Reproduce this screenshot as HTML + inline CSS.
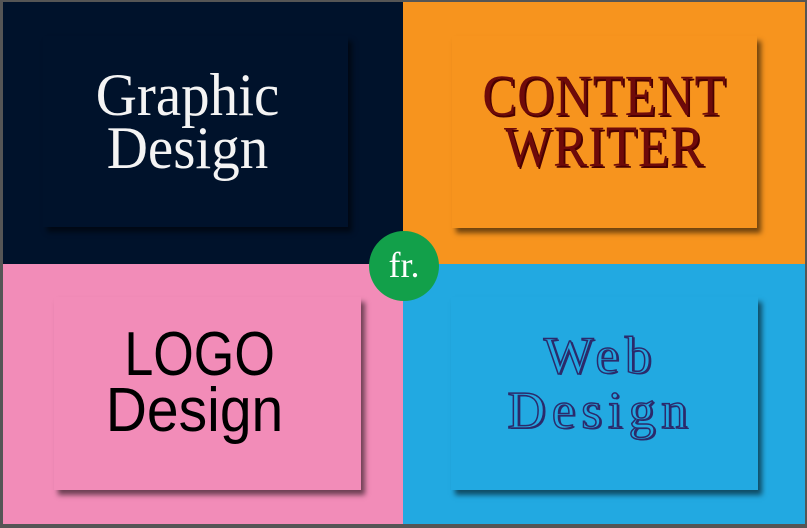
<!DOCTYPE html>
<html><head><style>
body{margin:0;width:807px;height:528px;background:#555;position:relative;overflow:hidden}
.q{position:absolute}
.card{position:absolute;box-shadow:4px 5px 5px rgba(0,0,0,.55)}
.t{position:absolute;left:0;right:0;text-align:center;white-space:nowrap}
.t span{display:inline-block}
</style></head><body>
<div class="q" style="left:3px;top:2px;width:400px;height:262px;background:#00122b"></div>
<div class="q" style="left:403px;top:2px;width:402px;height:262px;background:#f7941e"></div>
<div class="q" style="left:3px;top:264px;width:400px;height:260px;background:#f28cb8"></div>
<div class="q" style="left:403px;top:264px;width:402px;height:260px;background:#22a9e1"></div>

<div class="card" style="left:43px;top:36px;width:305px;height:191px;background:#00122b">
 <div class="t" style="top:33px;left:-16px;font:60px/53px 'Liberation Serif',serif;color:#f4f4f4;transform:scaleX(.95)">Graphic<br>Design</div>
</div>
<div class="card" style="left:452px;top:36px;width:305px;height:192px;background:#f7941e">
 <div class="t" style="top:34px;font:58px/51px 'Liberation Serif',serif;color:#6e0a0a;transform:scaleX(.88);text-shadow:2px 2px 0 #4a0000;letter-spacing:1px">CONTENT<br>WRITER</div>
</div>
<div class="card" style="left:54px;top:297px;width:307px;height:193px;background:#f28cb8">
 <div class="t" style="top:30px;left:-26px;font:62px/56px 'Liberation Sans',sans-serif;color:#000"><span style="transform:scaleX(.84);position:relative;left:5px">LOGO</span><br><span style="transform:scaleX(.92)">Design</span></div>
</div>
<div class="card" style="left:451px;top:297px;width:307px;height:193px;background:#22a9e1">
 <div class="t" style="top:32px;left:-14px;font:53px/55px 'Liberation Serif',serif;color:#22a9e1;-webkit-text-stroke:1.5px #2b2a6b;text-shadow:2px 1px 0 #2b2a6b;letter-spacing:6px;padding-left:6px">Web<br>Design</div>
</div>

<div class="q" style="left:369px;top:231px;width:70px;height:70px;border-radius:50%;background:#12a04a;color:#fff;font:36px/68px 'Liberation Serif',serif;text-align:center">fr.</div>
</body></html>
